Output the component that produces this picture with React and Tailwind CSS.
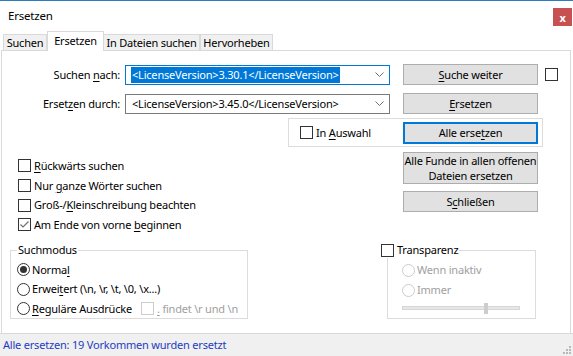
import React from 'react';

const U = ({ children }) => (
  <span className="underline decoration-1 underline-offset-[2px]">{children}</span>
);

function Box({ checked, disabled, className = '' }) {
  return (
    <span
      className={`w-[13px] h-[13px] shrink-0 border bg-white flex items-center justify-center ${
        disabled ? 'border-[#cccccc]' : 'border-[#333333]'
      } ${className}`}
    >
      {checked && (
        <svg width="11" height="11" viewBox="0 0 11 11">
          <path d="M1.5 5.5 L4 8 L9.5 2.5" fill="none" stroke="#707070" strokeWidth="1.2" />
        </svg>
      )}
    </span>
  );
}

function Radio({ checked, disabled }) {
  return (
    <span
      className={`w-[13px] h-[13px] shrink-0 rounded-full border bg-white flex items-center justify-center ${
        disabled ? 'border-[#cccccc]' : 'border-[#333333]'
      }`}
    >
      {checked && <span className="w-[7px] h-[7px] rounded-full bg-[#333333]" />}
    </span>
  );
}

function Btn({ children, focus, className = '' }) {
  return (
    <div
      className={`w-[135px] shrink-0 flex items-center justify-center text-center leading-[15px] bg-[#e1e1e1] ${
        focus ? 'border-2 border-[#0078d7]' : 'border border-[#adadad]'
      } ${className}`}
    >
      {children}
    </div>
  );
}

function Chevron() {
  return (
    <svg width="9" height="6" viewBox="0 0 9 6" className="ml-auto">
      <path d="M0.5 0.5 L4.5 4.5 L8.5 0.5" fill="none" stroke="#707070" strokeWidth="1" />
    </svg>
  );
}

function Check({ children, checked }) {
  return (
    <div className="h-[19.7px] flex items-center gap-[3px]">
      <Box checked={checked} />
      <span>{children}</span>
    </div>
  );
}

export default function App() {
  const tabs = ['Suchen', 'Ersetzen', 'In Dateien suchen', 'Hervorheben'];
  const widths = ['w-[44px]', 'w-[57px]', 'w-[96px]', 'w-[73px]'];

  return (
    <div className="w-[573px] h-[356px] bg-white flex flex-col border-t border-[#2e7bc0] overflow-hidden whitespace-nowrap font-['Noto_Sans',sans-serif] text-[11px] tracking-[-0.2px] text-black leading-[16px]">
      {/* Title bar */}
      <div className="h-[30px] flex items-start shrink-0">
        <span className="pl-[8px] mt-[7px] text-[11.5px]">Ersetzen</span>
        <div className="ml-auto mr-[1px] mt-[7px] w-[19px] h-[18px] bg-[#c75050] flex items-center justify-center text-white text-[11px] font-bold leading-none">
          x
        </div>
      </div>

      {/* Tabs */}
      <div className="h-[19px] flex items-end pl-[3px] shrink-0">
        {tabs.map((t, i) =>
          i === 1 ? (
            <div
              key={t}
              className={`${widths[i]} h-[20px] -mb-[1px] relative z-10 bg-white border border-b-0 border-[#d9d9d9] flex items-start justify-center pt-[1px]`}
            >
              {t}
            </div>
          ) : (
            <div
              key={t}
              className={`${widths[i]} h-[16px] bg-[#f0f0f0] border border-b-0 border-[#d9d9d9] flex items-center justify-center ${i === 2 ? 'border-l-0' : ''}`}
            >
              {t}
            </div>
          )
        )}
      </div>

      {/* Panel */}
      <div className="flex-1 ml-[1px] mr-[2px] border-t border-l border-r border-[#d9d9d9] flex flex-col">
        {/* Row 1 */}
        <div className="flex items-center mt-[13px] h-[21px]">
          <div className="w-[118px] text-right">
            Suchen <U>n</U>ach:
          </div>
          <div className="ml-[5px] w-[265px] h-[20px] border border-[#0078d7] flex items-center pl-[5px] pr-[5px]">
            <span className="bg-[#0078d7] text-white px-[1px]">&lt;LicenseVersion&gt;3.30.1&lt;/LicenseVersion&gt;</span>
            <Chevron />
          </div>
          <Btn className="ml-[13px] h-[21px]">
            <span>
              <U>S</U>uche weiter
            </span>
          </Btn>
          <Box className="ml-[7px]" />
        </div>

        {/* Row 2 */}
        <div className="flex items-center mt-[8px] h-[21px]">
          <div className="w-[118px] text-right">
            Erset<U>z</U>en durch:
          </div>
          <div className="ml-[5px] w-[265px] h-[20px] border border-[#7a7a7a] flex items-center pl-[6px] pr-[5px]">
            <span>&lt;LicenseVersion&gt;3.45.0&lt;/LicenseVersion&gt;</span>
            <Chevron />
          </div>
          <Btn className="ml-[13px] h-[21px]">
            <span>
              <U>E</U>rsetzen
            </span>
          </Btn>
        </div>

        {/* In Auswahl group */}
        <div className="ml-[286px] mt-[4px] w-[255px] h-[29px] border border-[#dcdcdc] flex items-center pl-[11px]">
          <div className="w-[103px] flex items-center gap-[3px]">
            <Box />
            <span>
              In <U>A</U>uswahl
            </span>
          </div>
          <Btn focus className="h-[22px]">
            <span>
              Alle erse<U>t</U>zen
            </span>
          </Btn>
        </div>

        {/* Options + buttons */}
        <div className="flex h-[90px] mt-[5px]">
          <div className="ml-[16px] w-[385px] pt-[4px] flex flex-col">
            <Check>
              <U>R</U>ückwärts suchen
            </Check>
            <Check>
              Nur <U>g</U>anze Wörter suchen
            </Check>
            <Check>
              Groß-/<U>K</U>leinschreibung beachten
            </Check>
            <Check checked>
              Am Ende von vorne <U>b</U>eginnen
            </Check>
          </div>
          <div className="flex flex-col">
            <Btn className="h-[32px]">
              <span>
                Alle Funde in allen offenen
                <br />
                Dateien ersetzen
              </span>
            </Btn>
            <Btn className="h-[21px] mt-[7px]">
              <span>
                S<U>c</U>hließen
              </span>
            </Btn>
          </div>
        </div>

        {/* Group boxes */}
        <div className="flex">
          <fieldset className="ml-[8px] w-[238px] min-w-0 h-[77px] border border-[#dcdcdc] overflow-hidden">
            <legend className="ml-[6px] px-[1px] leading-[16px]">Suchmodus</legend>
            <div className="pl-[6px] mt-[2px] flex flex-col">
              <div className="h-[19.5px] flex items-center gap-[2px]">
                <Radio checked />
                <span>
                  Norma<U>l</U>
                </span>
              </div>
              <div className="h-[19.5px] flex items-center gap-[2px]">
                <Radio />
                <span>
                  Erwei<U>t</U>ert (\n, \r, \t, \0, \x...)
                </span>
              </div>
              <div className="h-[19.5px] flex items-center gap-[2px]">
                <Radio />
                <span>
                  <U>R</U>eguläre Ausdrücke
                </span>
                <Box disabled className="ml-[7px]" />
                <span className="text-[#a0a0a0] ml-[1px]">
                  <U>.</U> findet \r und \n
                </span>
              </div>
            </div>
          </fieldset>

          <fieldset className="ml-[139px] w-[149px] min-w-0 h-[77px] border border-[#dcdcdc]">
            <legend className="-ml-[7px] pr-[1px] bg-white leading-[16px]">
              <span className="flex items-center gap-[3px]">
                <Box />
                <span>Transparenz</span>
              </span>
            </legend>
            <div className="pl-[14px] mt-[2px] flex flex-col text-[#a0a0a0]">
              <div className="h-[20px] flex items-center gap-[2px]">
                <Radio disabled />
                <span>Wenn inaktiv</span>
              </div>
              <div className="h-[20px] flex items-center gap-[2px]">
                <Radio disabled />
                <span>Immer</span>
              </div>
              <div className="h-[16px] w-[118px] flex items-center">
                <div className="flex-1 h-[4px] bg-[#e7e7e7] border border-[#d6d6d6] flex items-center">
                  <div className="ml-[81px] w-[4px] h-[11px] shrink-0 bg-[#cdcdcd]" />
                </div>
              </div>
            </div>
          </fieldset>
        </div>
      </div>

      {/* Status bar */}
      <div className="h-[23px] shrink-0 bg-[#f0f0f0] border-t border-[#d9d9d9] flex items-center pl-[3px] text-[#1f3cc0]">
        <span>Alle ersetzen: 19 Vorkommen wurden ersetzt</span>
        <svg width="10" height="10" viewBox="0 0 10 10" className="ml-auto self-end mb-[1px] mr-[1px]">
          <rect x="7" y="1" width="2" height="2" fill="#b8b8b8" />
          <rect x="4" y="4" width="2" height="2" fill="#b8b8b8" />
          <rect x="7" y="4" width="2" height="2" fill="#b8b8b8" />
          <rect x="1" y="7" width="2" height="2" fill="#b8b8b8" />
          <rect x="4" y="7" width="2" height="2" fill="#b8b8b8" />
          <rect x="7" y="7" width="2" height="2" fill="#b8b8b8" />
        </svg>
      </div>
    </div>
  );
}
